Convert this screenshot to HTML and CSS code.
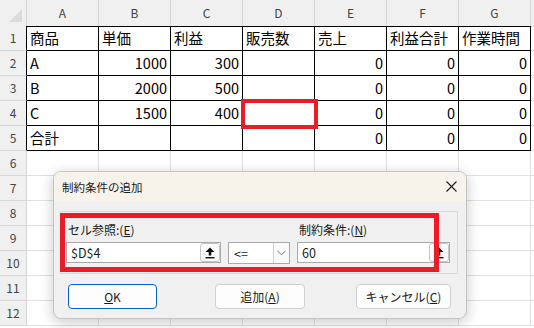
FILE: index.html
```html
<!DOCTYPE html>
<html lang="ja">

<head>
  <meta charset="UTF-8" />
  <title>制約条件の追加</title>
  <link rel="stylesheet" href="styles.css">
</head>

<body>
  <!-- シート -->
  <div class="sheet">
    <div class="row head">
      <div class="corner">
        <svg width="27" height="26" viewBox="0 0 27 26"><polygon points="22,9 22,22 9,22" fill="#dcdcdc" /></svg>
      </div>
      <div class="ch k">A</div>
      <div class="ch k">B</div>
      <div class="ch k">C</div>
      <div class="ch k">D</div>
      <div class="ch k">E</div>
      <div class="ch k">F</div>
      <div class="ch k">G</div>
      <div class="ch"></div>
    </div>
    <div class="row">
      <div class="rh k">1</div>
      <div class="c d">商品</div>
      <div class="c d">単価</div>
      <div class="c d">利益</div>
      <div class="c d">販売数</div>
      <div class="c d">売上</div>
      <div class="c d">利益合計</div>
      <div class="c d">作業時間</div>
      <div class="c"></div>
    </div>
    <div class="row">
      <div class="rh k">2</div>
      <div class="c d">A</div>
      <div class="c d n">1000</div>
      <div class="c d n">300</div>
      <div class="c d"></div>
      <div class="c d n">0</div>
      <div class="c d n">0</div>
      <div class="c d n">0</div>
      <div class="c"></div>
    </div>
    <div class="row">
      <div class="rh k">3</div>
      <div class="c d">B</div>
      <div class="c d n">2000</div>
      <div class="c d n">500</div>
      <div class="c d"></div>
      <div class="c d n">0</div>
      <div class="c d n">0</div>
      <div class="c d n">0</div>
      <div class="c"></div>
    </div>
    <div class="row">
      <div class="rh k">4</div>
      <div class="c d">C</div>
      <div class="c d n">1500</div>
      <div class="c d n">400</div>
      <div class="c d"></div>
      <div class="c d n">0</div>
      <div class="c d n">0</div>
      <div class="c d n">0</div>
      <div class="c"></div>
    </div>
    <div class="row">
      <div class="rh k">5</div>
      <div class="c d">合計</div>
      <div class="c d"></div>
      <div class="c d"></div>
      <div class="c d"></div>
      <div class="c d n">0</div>
      <div class="c d n">0</div>
      <div class="c d n">0</div>
      <div class="c"></div>
    </div>
    <div class="row">
      <div class="rh">6</div>
      <div class="c"></div><div class="c"></div><div class="c"></div><div class="c"></div>
      <div class="c"></div><div class="c"></div><div class="c"></div><div class="c"></div>
    </div>
    <div class="row">
      <div class="rh">7</div>
      <div class="c"></div><div class="c"></div><div class="c"></div><div class="c"></div>
      <div class="c"></div><div class="c"></div><div class="c"></div><div class="c"></div>
    </div>
    <div class="row">
      <div class="rh">8</div>
      <div class="c"></div><div class="c"></div><div class="c"></div><div class="c"></div>
      <div class="c"></div><div class="c"></div><div class="c"></div><div class="c"></div>
    </div>
    <div class="row">
      <div class="rh">9</div>
      <div class="c"></div><div class="c"></div><div class="c"></div><div class="c"></div>
      <div class="c"></div><div class="c"></div><div class="c"></div><div class="c"></div>
    </div>
    <div class="row">
      <div class="rh">10</div>
      <div class="c"></div><div class="c"></div><div class="c"></div><div class="c"></div>
      <div class="c"></div><div class="c"></div><div class="c"></div><div class="c"></div>
    </div>
    <div class="row">
      <div class="rh">11</div>
      <div class="c"></div><div class="c"></div><div class="c"></div><div class="c"></div>
      <div class="c"></div><div class="c"></div><div class="c"></div><div class="c"></div>
    </div>
    <div class="row">
      <div class="rh">12</div>
      <div class="c"></div><div class="c"></div><div class="c"></div><div class="c"></div>
      <div class="c"></div><div class="c"></div><div class="c"></div><div class="c"></div>
    </div>
  </div>

  <!-- D4 の赤枠 -->
  <div class="mark cell-mark"></div>

  <!-- ダイアログ -->
  <div class="dialog">
    <div class="title">
      <span>制約条件の追加</span>
      <svg class="close" width="11" height="11" viewBox="0 0 11 11">
        <path d="M0.5 0.5 L10.5 10.5 M10.5 0.5 L0.5 10.5" stroke="#1b1b1b" stroke-width="1.1" fill="none" />
      </svg>
    </div>
    <div class="frame">
      <label class="lbl">セル参照:(<u>E</u>)</label>
      <span></span>
      <label class="lbl">制約条件:(<u>N</u>)</label>
      <div class="input">
        <span class="val">$D$4</span>
        <span class="pick">
          <svg width="10" height="12" viewBox="0 0 10 12">
            <polygon points="5,0.5 9.5,5 6.3,5 6.3,8.5 3.7,8.5 3.7,5 0.5,5" fill="#111" />
            <rect x="0.5" y="10" width="9" height="1.4" fill="#111" />
          </svg>
        </span>
      </div>
      <div class="combo">
        <span class="val">&lt;=</span>
        <span class="drop">
          <svg width="9" height="6" viewBox="0 0 9 6"><path d="M0.5 0.8 L4.5 4.8 L8.5 0.8" stroke="#7a7a7a" stroke-width="1" fill="none" /></svg>
        </span>
      </div>
      <div class="input">
        <span class="val">60</span>
        <span class="pick">
          <svg width="10" height="12" viewBox="0 0 10 12">
            <polygon points="5,0.5 9.5,5 6.3,5 6.3,8.5 3.7,8.5 3.7,5 0.5,5" fill="#111" />
            <rect x="0.5" y="10" width="9" height="1.4" fill="#111" />
          </svg>
        </span>
      </div>
    </div>
    <div class="buttons">
      <div class="btn ok"><u>O</u>K</div>
      <div class="btn add">追加(<u>A</u>)</div>
      <div class="btn cancel">キャンセル(<u>C</u>)</div>
    </div>
    <div class="mark group-mark"></div>
  </div>
</body>

</html>
```

FILE: styles.css
```css
* {
  margin: 0;
  padding: 0;
  box-sizing: border-box;
}

body {
  width: 534px;
  height: 328px;
  overflow: hidden;
  background: #fff;
  font-family: "Noto Sans CJK JP", "Noto Sans", sans-serif;
  color: #000;
  position: relative;
}

/* シート */
.sheet {
  width: 534px;
  overflow: hidden;
}

.row {
  display: grid;
  grid-template-columns: 27px repeat(8, 72px);
  height: 25px;
}

.row.head {
  height: 26px;
}

.corner,
.ch,
.rh {
  background: #f0f0f0;
  color: #444;
  font-size: 12px;
  text-align: center;
  border-right: 1px solid #d6d6d6;
  border-bottom: 1px solid #d6d6d6;
}

.corner svg {
  display: block;
}

.ch {
  line-height: 25px;
}

.rh {
  line-height: 24px;
}

.ch.k {
  border-bottom-color: #000;
}

.rh.k {
  border-right-color: #000;
}

.c {
  border-right: 1px solid #e1e1e1;
  border-bottom: 1px solid #e1e1e1;
  padding: 0 3px;
  font-size: 14.5px;
  line-height: 24px;
  white-space: nowrap;
  overflow: hidden;
}

.c.d {
  border-right-color: #000;
  border-bottom-color: #000;
}

.c.n {
  text-align: right;
}

/* 赤枠 */
.mark {
  position: absolute;
  border: 4px solid #ed1c24;
}

.cell-mark {
  left: 241px;
  top: 99px;
  width: 77px;
  height: 30px;
}

.group-mark {
  left: 6px;
  top: 41px;
  width: 379px;
  height: 59px;
  border-width: 5px;
}

/* ダイアログ */
.dialog {
  position: absolute;
  left: 53px;
  top: 171px;
  width: 414px;
  height: 148px;
  border: 1px solid #c4c4c4;
  border-radius: 8px;
  background: #f0f0f0;
  box-shadow: 0 3px 14px rgba(0, 0, 0, 0.22);
  overflow: hidden;
  font-size: 12px;
  color: #1a1a1a;
}

.title {
  height: 29px;
  background: #f7f2ea;
  display: flex;
  align-items: center;
  justify-content: space-between;
  padding: 0 9px 0 8px;
  font-size: 11.5px;
}

.frame {
  margin: 10px 8px 0 6px;
  height: 63px;
  border: 1px solid #d9d9d9;
  padding: 9px 0 0 5px;
  display: grid;
  grid-template-columns: 155px 62px 153px;
  grid-template-rows: 18px 21px;
  column-gap: 7px;
  row-gap: 3px;
}

.lbl {
  line-height: 18px;
  padding-left: 2px;
}

.input,
.combo {
  background: #fff;
  border: 1px solid #a9a9a9;
  display: flex;
  align-items: center;
  justify-content: space-between;
  font-size: 12.5px;
}

.val {
  padding-left: 4px;
  line-height: 19px;
}

.pick {
  width: 20px;
  height: 19px;
  border: 1px solid #c6c6c6;
  border-radius: 3px;
  background: #fbfbfb;
  display: flex;
  align-items: center;
  justify-content: center;
}

.combo {
  height: 22px;
}

.combo .val {
  padding-left: 5px;
}

.drop {
  width: 16px;
  height: 20px;
  border-left: 1px solid #cfcfcf;
  background: #fafafa;
  display: flex;
  align-items: center;
  justify-content: center;
}

.buttons {
  display: flex;
  margin-top: 10px;
  padding-left: 14px;
}

.btn {
  height: 25px;
  line-height: 23px;
  border: 1px solid #d0d0d0;
  border-radius: 4px;
  background: #fdfdfd;
  text-align: center;
  font-size: 12px;
}

.btn.ok {
  width: 89px;
  border-color: #0067c0;
}

.btn.add {
  width: 90px;
  margin-left: 58px;
}

.btn.cancel {
  width: 95px;
  margin-left: 51px;
}
```
